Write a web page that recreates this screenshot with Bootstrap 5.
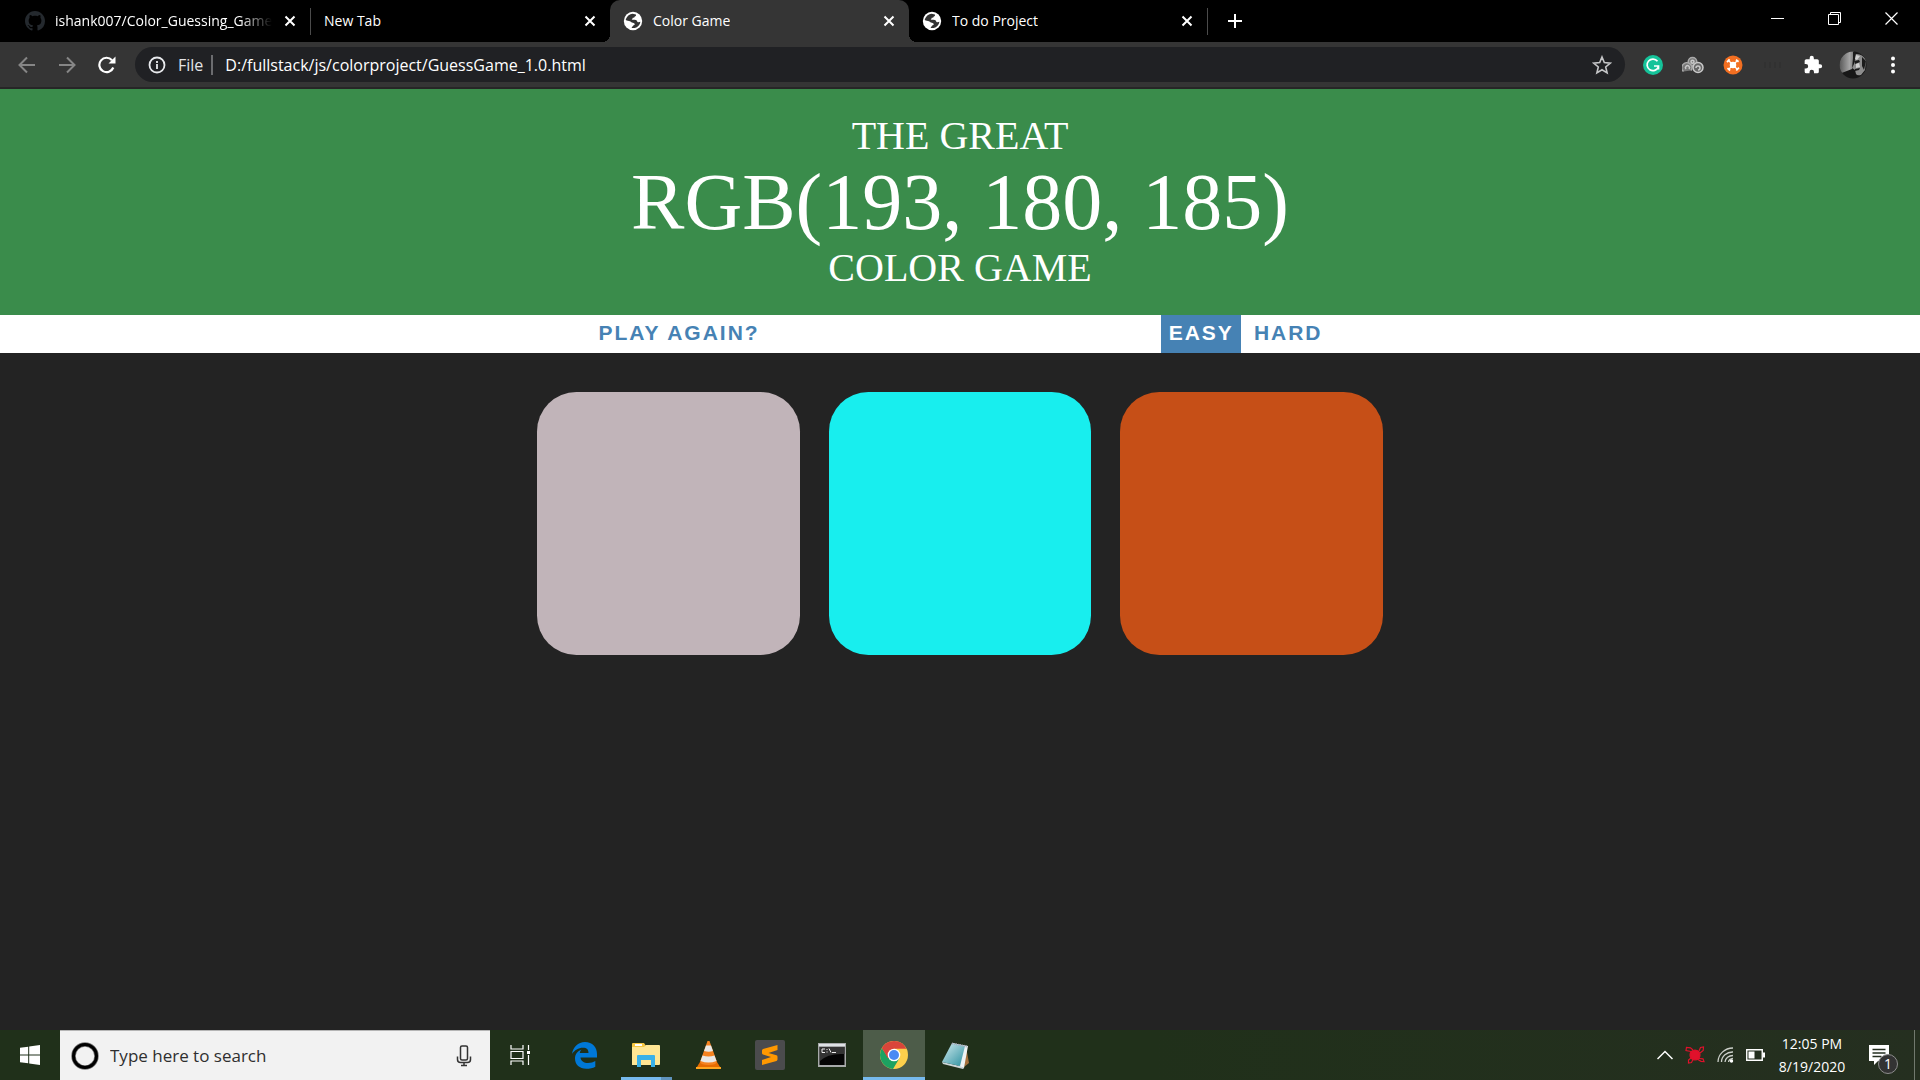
<!DOCTYPE html>
<html lang="en">
<head>
<meta charset="utf-8">
<meta name="viewport" content="width=device-width, initial-scale=1">
<title>Color Game</title>
<link href="https://cdn.jsdelivr.net/npm/bootstrap@5.3.0/dist/css/bootstrap.min.css" rel="stylesheet">
<style>
  body { background: #232323; font-family: "Open Sans", "Noto Sans", sans-serif; font-size: 14px; line-height: 20px; }
  svg { display: block; flex: none; }
  button { color: inherit; }
  .plain-btn { background: none; border: 0; padding: 0; display: flex; align-items: center; justify-content: center; flex: none; }

  /* tab strip */
  .tab-strip { background: #000; height: 42px; padding-left: 12px; color: #fff; }
  .tab-item { width: 299px; padding: 0 10px 0 13px; height: 42px; position: relative; }
  .tab-item a { color: #fff; text-decoration: none; min-width: 0; height: 42px; gap: 10px; }
  .tab-item .plain-btn { width: 20px; height: 42px; }
  .tab-item.divided { border-right: 1px solid transparent; border-image: linear-gradient(#000 9px, #4b4b4b 9px, #4b4b4b 34px, #000 34px) 1; }
  .tab-label { overflow: hidden; white-space: nowrap; line-height: 20px; }
  .tab-first a { max-width: 250px; }
  .fade-end { -webkit-mask-image: linear-gradient(90deg, #000 85%, transparent); mask-image: linear-gradient(90deg, #000 85%, transparent); }
  .tab-current { background: #353535; border-radius: 10px 10px 0 0; }
  .tab-current::before, .tab-current::after { content: ""; position: absolute; bottom: 0; width: 8px; height: 8px; }
  .tab-current::before { left: -8px; background: radial-gradient(circle at 0 0, transparent 8px, #353535 8px); }
  .tab-current::after { right: -8px; background: radial-gradient(circle at 100% 0, transparent 8px, #353535 8px); }
  .new-tab { width: 53px; height: 42px; }
  .win-btn { width: 57px; height: 36px; }

  /* toolbar */
  .tool-bar { background: #353535; height: 47px; padding: 0 7px; border-bottom: 2px solid #262626; color: #fff; }
  .tool-btn { width: 40px; height: 40px; }
  .omnibox { background: #202124; height: 35px; border-radius: 18px; margin: 0 8px; padding: 0 13px; font-size: 16px; }
  .omnibox input { background: none; border: 0; outline: 0; padding: 0; color: #fff; font-size: 16px; min-width: 0; }
  .scheme { color: #e3e4e6; border-right: 2px solid #6b6c6f; line-height: 20px; padding-right: 8px; margin: 0 12px 0 12px; }

  /* game */
  .game { font-family: "Liberation Serif", "Times New Roman", serif; }
  .game-title { background: #3a8c4b; color: #fff; padding: 25px 0; margin: 0; font-size: 40px; line-height: 44px; font-weight: 400; }
  .game-title .target { font-size: 80px; line-height: 88px; }
  .stripe { background: #fff; height: 38px; gap: 5px; }
  .stripe button { border: 0; background: none; color: #4682b4; font: bold 21px/24px "Liberation Sans", Arial, sans-serif; letter-spacing: 2px; padding: 0 7px 3px 8px; height: 38px; white-space: nowrap; }
  .stripe button.chosen { background: #4682b4; color: #fff; }
  .message { width: 20%; }
  .squares { max-width: 846px; gap: 29px; margin: 39px auto 0; }
  .square { border: 0; border-radius: 15%; flex: 1; aspect-ratio: 1; padding: 0; }

  /* taskbar */
  .task-bar { background: linear-gradient(90deg, #20301a 60%, #252f20); height: 50px; color: #fff; }
  .start { width: 60px; height: 50px; }
  .search-box { width: 430px; height: 50px; background: #f2f2f2; border-top: 1px solid #b5b5b5; padding: 0 18px 0 11px; }
  .search-box input { background: none; border: 0; outline: 0; padding: 0; margin-left: 11px; font-size: 17px; color: #2f2f2f; min-width: 0; }
  .search-box input::placeholder { color: #2f2f2f; opacity: 1; }
  .task-btn { width: 62px; height: 50px; }
  .task-view { width: 60px; margin-right: 3px; }
  .task-running { background: linear-gradient(90deg, #76b9ed 40px, #5f93bd 40px) 6px 47px / 51px 3px no-repeat; }
  .task-active { background: linear-gradient(#76b9ed, #76b9ed) 0 47px / 100% 3px no-repeat #4d5c49; }
  .tray-btn { width: 30px; height: 50px; }
  .clock { width: 84px; font-size: 14px; line-height: 23px; text-align: center; }
  .notes { width: 50px; height: 50px; position: relative; }
  .note-count { position: absolute; left: 24px; top: 24px; width: 20px; height: 20px; border-radius: 50%; border: 1px solid #8d8d8d; background: #333; font-size: 14px; line-height: 18px; }
  .peek { width: 6px; height: 50px; border-left: 1px solid #71796e; margin-left: 10px; }
</style>
<script src="https://cdn.jsdelivr.net/npm/bootstrap@5.3.0/dist/js/bootstrap.bundle.min.js"></script>
</head>
<body class="d-flex flex-column min-vh-100">

<svg width="0" height="0" class="position-absolute" aria-hidden="true">
  <symbol id="x" viewBox="0 0 12 12"><path d="M1.5 1.5l9 9M10.500 1.500l-9 9" stroke="#fff" stroke-width="2"/></symbol>
  <symbol id="globe" viewBox="0 0 24 24"><path fill="#fff" d="M12 1a11 11 0 1 0 0 22 11 11 0 0 0 0-22z"/><path fill="#333" d="M3.500 9.500C5 6 8 3.500 11.500 3.300l4 .8c.5 1.200-.2 2-1.400 2.400-.3 1.200-1 1.600-2.400 1.700-.4 1-.2 1.800-1.400 2.200 2 .2 5.200-.2 6.200 1 .6.900.4 1.800 1.500 2 1.200.2 2-.5 2.900-.6-.5 3.800-3.200 6.600-6.800 7.600l-3.500.1c-.3-1 .3-1.800 1.300-2.100.2-1.400 1.200-1.700 2.200-2-.1-1.600-.9-2.100-2.400-2.200-1.400-.1-1.900-1.400-3.300-1.900-1.600-.6-3.500-.3-5.100-1.400z"/></symbol>
</svg>

<header>
  <div class="tab-strip d-flex">
    <div class="tab-item tab-first divided d-flex">
      <a href="#" class="d-flex align-items-center flex-grow-1">
        <svg width="20" height="20" viewBox="0 0 16 16"><path fill="#24292e" d="M8 0C3.580 0 0 3.580 0 8c0 3.540 2.290 6.530 5.470 7.590.4.070.55-.17.55-.38 0-.19-.01-.82-.01-1.490-2.010.37-2.530-.49-2.690-.94-.09-.23-.48-.94-.82-1.130-.28-.15-.68-.52-.01-.53.63-.01 1.080.58 1.230.82.72 1.210 1.870.87 2.330.66.07-.52.28-.87.51-1.070-1.780-.2-3.640-.89-3.640-3.950 0-.87.31-1.590.82-2.150-.08-.2-.36-1.020.08-2.120 0 0 .67-.21 2.200.82.64-.18 1.320-.27 2-.27s1.360.09 2 .27c1.530-1.040 2.200-.82 2.200-.82.44 1.100.16 1.920.08 2.120.51.56.82 1.270.82 2.150 0 3.070-1.870 3.750-3.650 3.950.29.25.54.73.54 1.480 0 1.070-.01 1.930-.01 2.200 0 .21.15.46.55.38A8.010 8.010 0 0 0 16 8c0-4.420-3.580-8-8-8z"/></svg>
        <span class="tab-label fade-end">ishank007/Color_Guessing_Game</span>
      </a>
      <button class="plain-btn ms-auto" aria-label="Close tab"><svg width="12" height="12"><use href="#x"/></svg></button>
    </div>
    <div class="tab-item d-flex">
      <a href="#" class="d-flex align-items-center flex-grow-1"><span class="tab-label">New Tab</span></a>
      <button class="plain-btn" aria-label="Close tab"><svg width="12" height="12"><use href="#x"/></svg></button>
    </div>
    <div class="tab-item tab-current d-flex">
      <a href="#" class="d-flex align-items-center flex-grow-1"><svg width="20" height="20"><use href="#globe"/></svg><span class="tab-label">Color Game</span></a>
      <button class="plain-btn" aria-label="Close tab"><svg width="12" height="12"><use href="#x"/></svg></button>
    </div>
    <div class="tab-item divided d-flex">
      <a href="#" class="d-flex align-items-center flex-grow-1"><svg width="20" height="20"><use href="#globe"/></svg><span class="tab-label">To do Project</span></a>
      <button class="plain-btn" aria-label="Close tab"><svg width="12" height="12"><use href="#x"/></svg></button>
    </div>
    <button class="plain-btn new-tab" aria-label="New tab"><svg width="16" height="16" viewBox="0 0 16 16"><path d="M8 1v14M1 8h14" stroke="#fff" stroke-width="2"/></svg></button>
    <div class="d-flex ms-auto">
      <button class="plain-btn win-btn" aria-label="Minimize"><svg width="13" height="13"><path d="M0 6.500h13" stroke="#fff"/></svg></button>
      <button class="plain-btn win-btn" aria-label="Restore"><svg width="13" height="13" fill="none" stroke="#fff"><path d="M.5 2.500h10v10H.5zM2.500 2.500v-2h10v10h-2"/></svg></button>
      <button class="plain-btn win-btn" aria-label="Close"><svg width="13" height="13"><path d="M.5.5l12 12M12.500.5l-12 12" stroke="#fff" stroke-width="1.200"/></svg></button>
    </div>
  </div>

  <div class="tool-bar d-flex align-items-center">
    <button class="plain-btn tool-btn" aria-label="Back"><svg width="18" height="18" viewBox="0 0 18 18" fill="none" stroke="#868686" stroke-width="2"><path d="M17 9H2M9 1.500L1.500 9 9 16.500"/></svg></button>
    <button class="plain-btn tool-btn" aria-label="Forward"><svg width="18" height="18" viewBox="0 0 18 18" fill="none" stroke="#868686" stroke-width="2"><path d="M1 9h15M9 1.500L16.500 9 9 16.500"/></svg></button>
    <button class="plain-btn tool-btn" aria-label="Reload"><svg width="18" height="18" viewBox="0 0 18 18"><path d="M15.300 11.500A7.200 7.200 0 1 1 14 4.200" fill="none" stroke="#fff" stroke-width="2.200"/><path d="M17.500.5v7h-7z" fill="#fff"/></svg></button>
    <div class="omnibox d-flex align-items-center flex-grow-1">
      <svg width="18" height="18" viewBox="0 0 18 18"><circle cx="9" cy="9" r="7.500" fill="none" stroke="#e8eaed" stroke-width="1.800"/><path d="M9 8v5M9 5v2" stroke="#e8eaed" stroke-width="1.800"/></svg>
      <label class="scheme" for="address">File</label>
      <input id="address" type="text" class="flex-grow-1" value="D:/fullstack/js/colorproject/GuessGame_1.0.html">
      <button class="plain-btn" aria-label="Bookmark"><svg width="20" height="20" viewBox="0 0 20 20"><path d="M10 2l2.300 5.600 6 .5-4.600 3.900 1.400 5.900L10 14.700l-5.100 3.200L6.300 12 1.700 8.100l6-.5z" fill="none" stroke="#c4c5c7" stroke-width="1.600"/></svg></button>
    </div>
    <button class="plain-btn tool-btn" aria-label="Grammarly"><svg width="20" height="20" viewBox="0 0 20 20"><circle cx="10" cy="10" r="10" fill="#15c39a"/><path d="M14.500 6.300A5.800 5.800 0 1 0 15.300 12M11 11h4.500v3.500" fill="none" stroke="#fff" stroke-width="1.700"/></svg></button>
    <button class="plain-btn tool-btn" aria-label="Extension"><svg width="22" height="20" viewBox="0 0 22 20" fill="none" stroke="#c9c9c9" stroke-width="1.500"><circle cx="10.500" cy="6.800" r="4.300" fill="#777" stroke="#aaa"/><circle cx="10.500" cy="6.800" r="1.500"/><path d="M1.500 16.500a5 5 0 1 1 7.500-1" fill="#777" stroke="#aaa"/><path d="M4 14a2 2 0 1 1 3 0"/><circle cx="16" cy="12.500" r="5" fill="#666"/><path d="M14 13a2 2 0 1 1 2 2"/></svg></button>
    <button class="plain-btn tool-btn" aria-label="Extension"><svg width="20" height="20" viewBox="0 0 20 20"><circle cx="10" cy="10" r="9.500" fill="#f36f21"/><g stroke="#fff" stroke-width="1.300" fill="#fff"><circle cx="10" cy="10" r="2.600"/><path d="M5.500 5.500l9 9M14.500 5.500l-9 9"/><path d="M4 7.200l2.600-2.800M13 4.800l2.600 2M4.500 13.200l2.600 2.300M13.300 15.500l2.600-2.800" stroke-width="1.800"/></g></svg></button>
    <button class="plain-btn tool-btn" aria-label="Extension"><svg width="18" height="10"><path d="M1 2v6M6 2v6M11 2v6M16 2v6" stroke="#313131" stroke-width="2"/></svg></button>
    <button class="plain-btn tool-btn" aria-label="Extensions"><svg width="20" height="20" viewBox="0 0 24 24"><path fill="#fff" d="M20.500 11H19V7a2 2 0 0 0-2-2h-4V3.500a2.500 2.500 0 0 0-5 0V5H4a2 2 0 0 0-2 2v3.800h1.500a2.700 2.700 0 0 1 0 5.400H2V20a2 2 0 0 0 2 2h3.800v-1.500a2.700 2.700 0 0 1 5.400 0V22H17a2 2 0 0 0 2-2v-4h1.500a2.500 2.500 0 0 0 0-5z"/></svg></button>
    <button class="plain-btn tool-btn" aria-label="Profile"><svg width="28" height="28" viewBox="0 0 28 28"><defs><clipPath id="av"><circle cx="14" cy="14" r="13.500"/></clipPath><linearGradient id="avg"><stop offset="0" stop-color="#555"/><stop offset=".7" stop-color="#a5a5a5"/><stop offset="1" stop-color="#777"/></linearGradient></defs><g clip-path="url(#av)"><path fill="#171717" d="M0 0h28v28H0z"/><path fill="url(#avg)" d="M0 0h15l-1 7-1 11-13 5z"/><path fill="#8d8d8d" d="M16 3q7-1 11 6l-1 10-4 5q-4 1-5-1l-1-4-3-2 2-4z"/><path fill="#1b1b1b" d="M15 10l5-1 1 2-5 2zM16 18l5-1-1 2-4 1zM23 6l4 4-2 9-2-4zM14 0l3 2-1 7-2 3z"/><path fill="#cfcfcf" d="M17 4l4 1-3 4-2-1zM17 13l3-1 1 4-4 1z"/></g></svg></button>
    <button class="plain-btn tool-btn" aria-label="Menu"><svg width="6" height="18" fill="#fff"><circle cx="3" cy="2.500" r="2"/><circle cx="3" cy="9" r="2"/><circle cx="3" cy="15.500" r="2"/></svg></button>
  </div>
</header>

<main class="game flex-grow-1">
  <h1 class="game-title text-center">THE GREAT<br><span class="target d-block">RGB(193, 180, 185)</span>COLOR GAME</h1>
  <div class="stripe d-flex justify-content-center">
    <button>PLAY AGAIN?</button>
    <span class="message"></span>
    <button class="chosen">EASY</button>
    <button>HARD</button>
  </div>
  <div class="squares d-flex">
    <button class="square" style="background:rgb(193,180,185)" aria-label="Color 1"></button>
    <button class="square" style="background:rgb(24,238,238)" aria-label="Color 2"></button>
    <button class="square" style="background:rgb(198,79,23)" aria-label="Color 3"></button>
  </div>
</main>

<footer class="task-bar d-flex align-items-center">
  <button class="plain-btn start" aria-label="Start"><svg width="20" height="20" viewBox="0 0 20 20" fill="#fff"><path d="M0 2.800l8.200-1.100v7.800H0zM9.200 1.500L20 0v9.500H9.200zM0 10.500h8.200v7.800L0 17.200zM9.200 10.500H20V20L9.200 18.500z"/></svg></button>
  <div class="search-box d-flex align-items-center">
    <svg width="28" height="28"><circle cx="14" cy="14" r="11.500" fill="none" stroke="#777" stroke-width="4.500"/><circle cx="14" cy="14" r="11.500" fill="none" stroke="#000" stroke-width="3"/></svg>
    <input type="text" class="flex-grow-1" placeholder="Type here to search" aria-label="Search">
    <svg width="16" height="22" viewBox="0 0 16 22" fill="none" stroke="#333" stroke-width="1.500"><rect x="4.500" y="1" width="7" height="14" rx="1.500"/><path d="M1.500 11.500v3q0 3 3 3h7q3 0 3-3v-3M8 17.500V21M5 20.500h6"/></svg>
  </div>
  <button class="plain-btn task-btn task-view" aria-label="Task view"><svg width="20" height="20" fill="none" stroke="#fff" stroke-width="1.200"><path d="M1 0v4h12V0M1 20v-4h12v4M1 6.500h12v7H1zM18.500 0v5M18.500 10v10"/><path d="M17 6h3v3h-3z" fill="#fff" stroke="none"/></svg></button>
  <button class="plain-btn task-btn" aria-label="Edge"><svg width="25" height="27" viewBox="0 0 25 27"><path fill="#0078d7" d="M0 12C1 5 6 0 13 0c7.500 0 12 5 12 12v3.500H8.500c.2 3.500 3.500 5.500 7.500 5.500 3 0 5.300-.8 7.300-2v5.700c-2.500 1.500-5.500 2.100-9 2.100C7.500 26.800 3 22.500 3 16.500 3 12.500 5.500 9 9.500 7.500 8.500 8.500 8 9.800 7.800 11h8.700c0-3.500-1.700-5.200-5.500-5.200-4.500 0-8.500 2.500-11 6.200z"/></svg></button>
  <button class="plain-btn task-btn task-running" aria-label="File Explorer"><svg width="28" height="24" viewBox="0 0 28 24"><path fill="#f6c744" d="M0 1q0-1 1-1h11l2 3h13v5H0z"/><path fill="#fff" d="M3 1h7v2H3z"/><path fill="#ffe694" d="M0 4h12l2-2h13q1 0 1 1v18q0 1-1 1H0z"/><path fill="#3ab1e8" d="M5 24V13q0-1 1-1h16q1 0 1 1v11h-4v-7H9v7z"/><path fill="#ffe694" d="M9 17h10v5H9z"/></svg></button>
  <button class="plain-btn task-btn" aria-label="VLC"><svg width="25" height="28" viewBox="0 0 25 28"><path fill="#e56a00" d="M4 21h17l4 6.500H0z"/><path fill="#ffa51f" d="M0 26h25v2H0z"/><path fill="#f58220" d="M11.500 0h2L21 21q-1 3-8.500 3T4 21z"/><path fill="#e8e8e8" d="M10 4.500h5L17 10q-4 1.500-9 0zM6.500 14.500q6 2 12 0L20.500 20q-8 3-16 0z"/></svg></button>
  <button class="plain-btn task-btn" aria-label="Sublime Text"><svg width="30" height="30" viewBox="0 0 30 30"><rect width="30" height="30" rx="2" fill="#4b4b4d"/><path fill="#ff9800" d="M7 10.500Q7 9.500 8 9L22.500 5v5l-9 3 8 2.300q1 .4 1 1.500v2.700q0 1-1 1.400L7 25v-5l9-3-8-2.500q-1-.4-1-1.500z"/></svg></button>
  <button class="plain-btn task-btn" aria-label="Command Prompt"><svg width="28" height="24" viewBox="0 0 28 24"><path fill="#a7a9aa" d="M0 0h28v24H0z"/><path fill="#dfe3e6" d="M1 1h26v2H1z"/><path fill="#050505" d="M1.500 4h25v18h-25z"/><path fill="#333" d="M2 4h24.500v7Q10 10 2 18z"/><path d="M7 6H4v3.500h3M9 6v1M9 8.500v1M11 5.500l2 4M14 9.500h4" fill="none" stroke="#eee"/></svg></button>
  <button class="plain-btn task-btn task-active" aria-label="Chrome"><svg width="28" height="28" viewBox="0 0 28 28"><circle cx="14" cy="14" r="14" fill="#fdd04c"/><path fill="#d9453a" d="M14 14L1.900 7A14 14 0 0 1 26.500 7.700H14z"/><path fill="#1da261" d="M1.900 7A14 14 0 0 0 13 28l6.300-10.500L14 14 8.500 17z"/><path fill="#d9453a" d="M1.900 7l6 10.200L14 14V7z"/><circle cx="14" cy="14" r="6.300" fill="#fff"/><circle cx="14" cy="14" r="5" fill="#4a8af4"/></svg></button>
  <button class="plain-btn task-btn" aria-label="Notepad"><svg width="28" height="27" viewBox="0 0 28 27"><defs><linearGradient id="np" x2="1" y2="1"><stop offset="0" stop-color="#d5edf0"/><stop offset="1" stop-color="#2a8f9f"/></linearGradient></defs><path fill="#a5713c" d="M24 5l3 16-5 4z"/><path fill="#eef3f4" d="M10 1l16 3-4 22-5-1z"/><path fill="#cdd6d8" d="M0 20l18 4 4 2-1 1L1 22z"/><path fill="url(#np)" d="M10 1l13 3-5 20L0 20z"/><path d="M10 1.500l15 3" stroke="#aab" stroke-width="2" stroke-dasharray="1 1"/></svg></button>

  <div class="d-flex align-items-center ms-auto">
    <button class="plain-btn tray-btn" aria-label="Show hidden icons"><svg width="16" height="10"><path d="M.5 9L8 1.500 15.500 9" fill="none" stroke="#fff" stroke-width="1.500"/></svg></button>
    <button class="plain-btn tray-btn" aria-label="Antivirus"><svg width="20" height="18" viewBox="0 0 20 18" fill="none" stroke="#e0112b" stroke-width="1.200"><circle cx="10" cy="9" r="5" fill="#e0112b"/><path d="M6 5.500L1 4.500 1.500 1.500l4 .3L8 4M14 5l1.500-3.500 3-.5-.3 3.500L15 7M14 12.500l4 .3 1 2.700-3-.2-3.500-2M6 12l-2.500 2v3l3-.5L8 13.500"/></svg></button>
    <button class="plain-btn tray-btn" aria-label="Network"><svg width="17" height="16" viewBox="0 0 17 16" fill="none" stroke-width="1.300"><path d="M1 15A15 14 0 0 1 16 1M4.500 15A11 10 0 0 1 16 5" stroke="#ccd0ca"/><path d="M8 15a8 7 0 0 1 8-6.500M11.500 15a5 4 0 0 1 4.500-3.500" stroke="#ccd0ca"/><circle cx="14.500" cy="14" r="1.700" fill="#fff"/></svg></button>
    <button class="plain-btn tray-btn" aria-label="Battery"><svg width="19" height="12"><path d="M.75.75h15.500v10.500H.75z" fill="none" stroke="#fff" stroke-width="1.400"/><path d="M2.500 2.500h6v7h-6zM17 3.500h2v5h-2z" fill="#fff"/></svg></button>
    <div class="clock">12:05 PM<br>8/19/2020</div>
    <button class="plain-btn notes" aria-label="Notifications"><svg width="20" height="20" viewBox="0 0 20 20"><path fill="#fff" d="M0 0h20v16H9l-4 4v-4H0z"/><path d="M3.500 4.500h13M3.500 8h13M3.500 11.500h9" stroke="#252f20" stroke-width="1.300"/></svg><span class="note-count">1</span></button>
    <div class="peek"></div>
  </div>
</footer>
</body>
</html>
